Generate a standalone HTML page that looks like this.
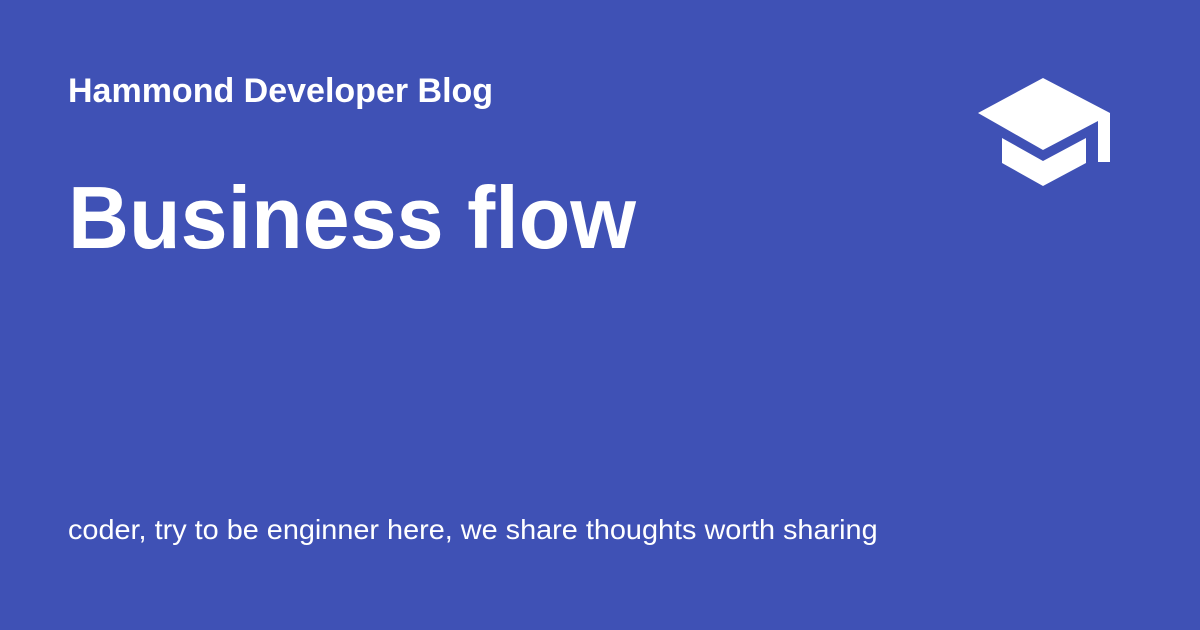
<!DOCTYPE html>
<html><head><meta charset="utf-8"><style>
html,body{margin:0;padding:0}
body{width:1200px;height:630px;background:#3f51b5;position:relative;overflow:hidden;font-family:"Liberation Sans",sans-serif;color:#fff}
.t{position:absolute;left:68px;white-space:nowrap;transform-origin:0 0;line-height:1}
#h{top:74px;font-size:34px;font-weight:bold;transform:scaleX(1.0)}
#b{top:174px;font-size:88px;font-weight:bold;transform:scaleX(0.96)}
#s{top:516px;font-size:28px;transform:scaleX(1.03)}
</style></head><body>
<div class="t" id="h">Hammond Developer Blog</div>
<div class="t" id="b">Business flow</div>
<div class="t" id="s">coder, try to be enginner here, we share thoughts worth sharing</div>
<svg width="1200" height="630" style="position:absolute;left:0;top:0">
<polygon fill="#fff" points="1043,78 1110,113 1110,162 1098,162 1098,121 1043,150 978,113"/>
<polygon fill="#fff" points="1002,138 1043,161 1086,138 1086,163 1043,186 1002,163"/>
</svg>
</body></html>
